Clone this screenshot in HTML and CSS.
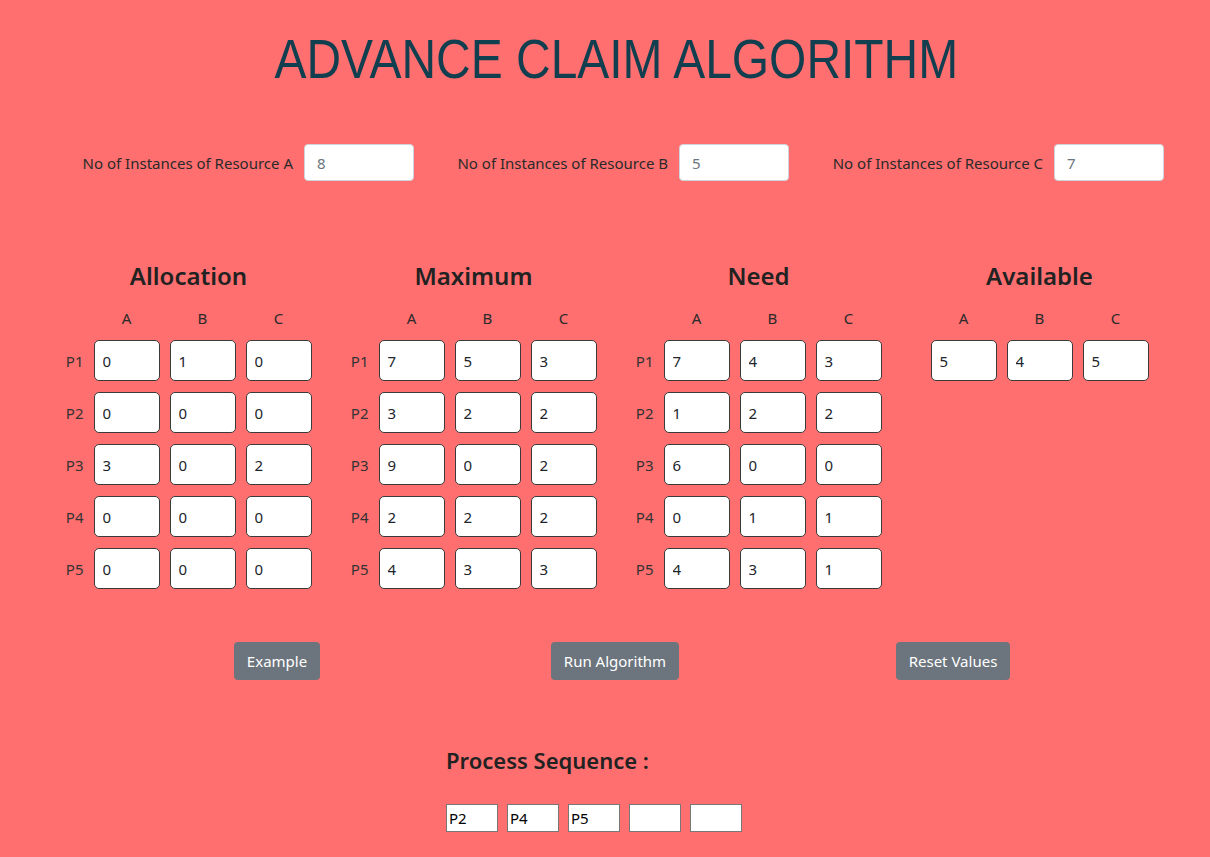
FILE: index.html
```html
<!DOCTYPE html>
<html>
<head>
<meta charset="utf-8">
<link rel="stylesheet" href="styles.css">
</head>
<body>
<div class="page">
  <h1 class="title"><span class="title-text">ADVANCE CLAIM ALGORITHM</span></h1>

  <div class="resources">
    <div class="res"><label>No of Instances of Resource A</label><input class="res-input" value="8"></div>
    <div class="res"><label>No of Instances of Resource B</label><input class="res-input" value="5"></div>
    <div class="res"><label>No of Instances of Resource C</label><input class="res-input" value="7"></div>
  </div>

  <div class="matrices">
    <div class="mcol">
      <h4 class="mtitle">Allocation</h4>
      <div class="mgrid">
        <span></span><span class="hd">A</span><span class="hd">B</span><span class="hd">C</span>
        <span class="pl">P1</span><input class="cell" value="0"><input class="cell" value="1"><input class="cell" value="0">
        <span class="pl">P2</span><input class="cell" value="0"><input class="cell" value="0"><input class="cell" value="0">
        <span class="pl">P3</span><input class="cell" value="3"><input class="cell" value="0"><input class="cell" value="2">
        <span class="pl">P4</span><input class="cell" value="0"><input class="cell" value="0"><input class="cell" value="0">
        <span class="pl">P5</span><input class="cell" value="0"><input class="cell" value="0"><input class="cell" value="0">
      </div>
    </div>
    <div class="mcol">
      <h4 class="mtitle">Maximum</h4>
      <div class="mgrid">
        <span></span><span class="hd">A</span><span class="hd">B</span><span class="hd">C</span>
        <span class="pl">P1</span><input class="cell" value="7"><input class="cell" value="5"><input class="cell" value="3">
        <span class="pl">P2</span><input class="cell" value="3"><input class="cell" value="2"><input class="cell" value="2">
        <span class="pl">P3</span><input class="cell" value="9"><input class="cell" value="0"><input class="cell" value="2">
        <span class="pl">P4</span><input class="cell" value="2"><input class="cell" value="2"><input class="cell" value="2">
        <span class="pl">P5</span><input class="cell" value="4"><input class="cell" value="3"><input class="cell" value="3">
      </div>
    </div>
    <div class="mcol">
      <h4 class="mtitle">Need</h4>
      <div class="mgrid">
        <span></span><span class="hd">A</span><span class="hd">B</span><span class="hd">C</span>
        <span class="pl">P1</span><input class="cell" value="7"><input class="cell" value="4"><input class="cell" value="3">
        <span class="pl">P2</span><input class="cell" value="1"><input class="cell" value="2"><input class="cell" value="2">
        <span class="pl">P3</span><input class="cell" value="6"><input class="cell" value="0"><input class="cell" value="0">
        <span class="pl">P4</span><input class="cell" value="0"><input class="cell" value="1"><input class="cell" value="1">
        <span class="pl">P5</span><input class="cell" value="4"><input class="cell" value="3"><input class="cell" value="1">
      </div>
    </div>
    <div class="mcol avail">
      <h4 class="mtitle">Available</h4>
      <div class="mgrid agrid">
        <span class="hd">A</span><span class="hd">B</span><span class="hd">C</span>
        <input class="cell" value="5"><input class="cell" value="4"><input class="cell" value="5">
      </div>
    </div>
  </div>

  <div class="buttons">
    <div class="bcol"><button class="btn">Example</button></div>
    <div class="bcol"><button class="btn">Run Algorithm</button></div>
    <div class="bcol"><button class="btn">Reset Values</button></div>
  </div>

  <div class="sequence">
    <h4 class="seq-title">Process Sequence :</h4>
    <div class="seq-boxes">
      <input class="seq" value="P2"><input class="seq" value="P4"><input class="seq" value="P5"><input class="seq" value=""><input class="seq" value="">
    </div>
  </div>
</div>
</body>
</html>
```

FILE: styles.css
```css
* { box-sizing: border-box; }
html, body {
  margin: 0;
  padding: 0;
  background: #ff6f6f;
}
body {
  font-family: "Noto Sans", "Open Sans", sans-serif;
  font-size: 15px;
  color: #212529;
}
.page {
  width: 1140px;
  margin-left: 46px;
  padding-top: 24px;
}
.title {
  margin: 0;
  text-align: center;
  font-family: "Liberation Sans", Arial, sans-serif;
  font-weight: normal;
  font-size: 56px;
  line-height: 70px;
  color: #123f4f;
}
.title-text {
  display: inline-block;
  transform: scaleX(0.856);
  white-space: nowrap;
}
.resources {
  display: flex;
  gap: 42px;
  padding-left: 35px;
  margin-top: 50px;
}
.res {
  display: flex;
  align-items: center;
  gap: 11px;
  width: 333px;
  justify-content: flex-end;
}
.res label {
  white-space: nowrap;
  color: #2a2a2a;
}
.res-input {
  width: 110px;
  height: 37px;
  border: 1px solid #ced4da;
  border-radius: 4px;
  background: #fff;
  padding: 0 12px;
  font: inherit;
  color: #6c757d;
}
.matrices {
  display: grid;
  grid-template-columns: repeat(4, 285px);
  margin-top: 80px;
}
.mcol {
  display: flex;
  flex-direction: column;
  align-items: center;
}
.avail { padding-right: 8px; }
.mtitle {
  margin: 0 0 17px 0;
  font-size: 24px;
  font-weight: 600;
  line-height: 30px;
  color: #222;
}
.mgrid {
  display: grid;
  grid-template-columns: 18px repeat(3, 66px);
  column-gap: 10px;
  row-gap: 11px;
  align-items: center;
}
.agrid {
  grid-template-columns: repeat(3, 66px);
}
.hd {
  text-align: center;
  line-height: 20px;
  margin-bottom: 1px;
  color: #2a2a2a;
}
.pl {
  color: #333;
  text-align: right;
}
.cell {
  width: 66px;
  height: 41px;
  border: 1px solid #3a3a3a;
  border-radius: 5px;
  background: #fff;
  padding: 0 8px;
  font: inherit;
  color: #212529;
}
.buttons {
  display: grid;
  grid-template-columns: repeat(3, 338px);
  margin-left: 62px;
  margin-top: 53px;
}
.bcol {
  display: flex;
  justify-content: center;
}
.btn {
  height: 38px;
  padding: 0 13px;
  border: none;
  border-radius: 4px;
  background: #6c757d;
  color: #fff;
  font: inherit;
}
.sequence {
  margin-left: 400px;
  margin-top: 64px;
}
.seq-title {
  margin: 0;
  font-size: 22px;
  font-weight: 600;
  line-height: 32px;
  color: #222;
}
.seq-boxes {
  display: flex;
  gap: 9px;
  margin-top: 28px;
}
.seq {
  width: 52px;
  height: 28px;
  border: 1px solid #777;
  border-radius: 0;
  background: #fff;
  padding: 0 2px;
  font: inherit;
  color: #000;
}
```
